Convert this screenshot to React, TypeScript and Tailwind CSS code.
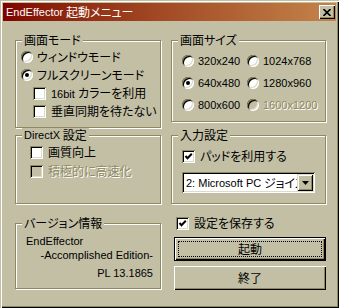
import type { ReactNode } from 'react';

// Windows classic "Brick" style launcher dialog

function J({ children }: { children: ReactNode }) {
  return (
    <span className="font-['Noto_Sans_CJK_JP'] text-[12px] [font-feature-settings:'palt']">{children}</span>
  );
}

function Group({ label, className, children }: { label: ReactNode; className: string; children?: ReactNode }) {
  return (
    <div className={`relative border border-[#8d8961] shadow-[inset_1px_1px_0_#fff,1px_1px_0_#fff] ${className}`}>
      <div className="absolute left-[6px] top-[-8px] h-[14px] px-[2px] flex items-center bg-[#c2bfa5] text-black">
        {label}
      </div>
      {children}
    </div>
  );
}

function Radio({ checked = false, disabled = false }: { checked?: boolean; disabled?: boolean }) {
  return (
    <span
      className={`w-[12px] h-[12px] rounded-full shrink-0 flex items-center justify-center shadow-[inset_1px_1px_0_#8d8961,inset_-1px_-1px_0_#fff,inset_2px_2px_0_#000,inset_-2px_-2px_0_#dcdac8] ${
        disabled ? 'bg-[#c2bfa5]' : 'bg-white'
      }`}
    >
      {checked && <span className="w-[4px] h-[4px] rounded-full bg-black" />}
    </span>
  );
}

function Check({ checked = false, disabled = false }: { checked?: boolean; disabled?: boolean }) {
  return (
    <span
      className={`w-[13px] h-[13px] shrink-0 flex items-center justify-center shadow-[inset_1px_1px_0_#8d8961,inset_-1px_-1px_0_#fff,inset_2px_2px_0_#000,inset_-2px_-2px_0_#dcdac8] ${
        disabled ? 'bg-[#c2bfa5]' : 'bg-white'
      }`}
    >
      {checked && (
        <svg width="9" height="9" viewBox="0 0 9 9">
          <path d="M1.5 4 L3.5 6.2 L7.8 1.8" stroke="#000" strokeWidth="2" fill="none" />
        </svg>
      )}
    </span>
  );
}

function Opt({ control, children, disabled = false, className }: { control: ReactNode; children: ReactNode; disabled?: boolean; className: string }) {
  return (
    <div className={`flex items-center ${className}`}>
      {control}
      <span className={disabled ? 'text-[#8d8961] [text-shadow:1px_1px_0_#fff]' : 'text-black'}>{children}</span>
    </div>
  );
}

export default function App() {
  return (
    <div className="w-[339px] h-[308px] p-[3px] bg-[#c2bfa5] font-['Liberation_Sans',sans-serif] text-[11px] leading-[14px] text-black shadow-[inset_1px_1px_0_#c2bfa5,inset_2px_2px_0_#fff,inset_-1px_-1px_0_#000,inset_-2px_-2px_0_#8d8961]">
      {/* Title bar */}
      <div className="h-[18px] flex items-center bg-linear-to-r from-[#800000] to-[#c4844a] text-white pl-[3px]">
        <span>EndEffector </span>
        <J>&nbsp;起動メニュー</J>
        <div className="ml-auto mr-[1px] w-[16px] h-[14px] bg-[#c2bfa5] flex items-center justify-center shadow-[inset_1px_1px_0_#fff,inset_-1px_-1px_0_#000,inset_-2px_-2px_0_#8d8961]">
          <svg width="8" height="7" viewBox="0 0 8 7">
            <path d="M0.5 0 L7.5 7 M7.5 0 L0.5 7" stroke="#000" strokeWidth="1.6" />
          </svg>
        </div>
      </div>

      <div className="flex gap-[10px] pl-[12px] pt-[19px]">
        {/* Left column */}
        <div className="w-[146px] flex flex-col">
          <Group label={<J>画面モード</J>} className="h-[88px] pt-[7px] pl-[5px]">
            <Opt control={<Radio />} className="h-[18px] gap-[4px]">
              <J>ウィンドウモード</J>
            </Opt>
            <Opt control={<Radio checked />} className="h-[18px] gap-[4px]">
              <J>フルスクリーンモード</J>
            </Opt>
            <Opt control={<Check />} className="h-[18px] gap-[5px] pl-[12px]">
              16bit <J>カラーを利用</J>
            </Opt>
            <Opt control={<Check />} className="h-[18px] gap-[5px] pl-[12px]">
              <J>垂直同期を待たない</J>
            </Opt>
          </Group>

          <Group label={<>DirectX <J>&nbsp;設定</J></>} className="mt-[7px] h-[69px] pt-[7px] pl-[14px]">
            <Opt control={<Check />} className="h-[19px] gap-[5px]">
              <J>画質向上</J>
            </Opt>
            <Opt control={<Check disabled />} disabled className="h-[19px] gap-[5px]">
              <J>積極的に高速化</J>
            </Opt>
          </Group>

          <Group label={<J>バージョン情報</J>} className="mt-[19px] h-[66px] pt-[10px] pl-[10px] pr-[7px] flex flex-col">
            <div>EndEffector</div>
            <div className="text-right">-Accomplished Edition-</div>
            <div className="text-right mt-[4px]">PL 13.1865</div>
          </Group>
        </div>

        {/* Right column */}
        <div className="w-[155px] flex flex-col">
          <Group label={<J>画面サイズ</J>} className="h-[82px] pt-[9px] pl-[10px]">
            {[
              ['320x240', '1024x768', false, false],
              ['640x480', '1280x960', true, false],
              ['800x600', '1600x1200', false, true],
            ].map(([a, b, sel, dis]) => (
              <div key={a as string} className="h-[22px] flex items-center">
                <Opt control={<Radio checked={sel as boolean} />} className="w-[65px] gap-[4px]">
                  {a}
                </Opt>
                <Opt control={<Radio disabled={dis as boolean} />} disabled={dis as boolean} className="gap-[4px]">
                  {b}
                </Opt>
              </div>
            ))}
          </Group>

          <Group label={<J>入力設定</J>} className="mt-[13px] h-[69px] pt-[11px] pl-[10px]">
            <Opt control={<Check checked />} className="h-[18px] gap-[5px]">
              <J>パッドを利用する</J>
            </Opt>
            <div className="mt-[7px] w-[133px] h-[21px] bg-white flex items-stretch p-[2px] shadow-[inset_1px_1px_0_#8d8961,inset_-1px_-1px_0_#fff,inset_2px_2px_0_#000,inset_-2px_-2px_0_#dcdac8]">
              <div className="flex-1 overflow-hidden whitespace-nowrap pl-[2px] flex items-center">
                2: Microsoft PC <J>&nbsp;ジョイスティック</J>
              </div>
              <div className="w-[16px] bg-[#c2bfa5] flex items-center justify-center shadow-[inset_1px_1px_0_#dcdac8,inset_-1px_-1px_0_#000,inset_2px_2px_0_#fff,inset_-2px_-2px_0_#8d8961]">
                <svg width="7" height="4" viewBox="0 0 7 4">
                  <path d="M0 0 H7 L3.5 4 Z" fill="#000" />
                </svg>
              </div>
            </div>
          </Group>

          <Opt control={<Check checked />} className="mt-[10px] ml-[5px] h-[18px] gap-[5px]">
            <J>設定を保存する</J>
          </Opt>

          <button className="mt-[5px] ml-[3px] w-[152px] h-[24px] p-[3px] flex border border-black bg-[#c2bfa5] shadow-[inset_1px_1px_0_#fff,inset_-1px_-1px_0_#000,inset_-2px_-2px_0_#8d8961]">
            <span className="flex-1 flex items-center justify-center border border-dotted border-black">
              <J>起動</J>
            </span>
          </button>
          <button className="mt-[5px] ml-[3px] w-[152px] h-[24px] flex items-center justify-center bg-[#c2bfa5] shadow-[inset_1px_1px_0_#fff,inset_-1px_-1px_0_#000,inset_-2px_-2px_0_#8d8961]">
            <J>終了</J>
          </button>
        </div>
      </div>
    </div>
  );
}
